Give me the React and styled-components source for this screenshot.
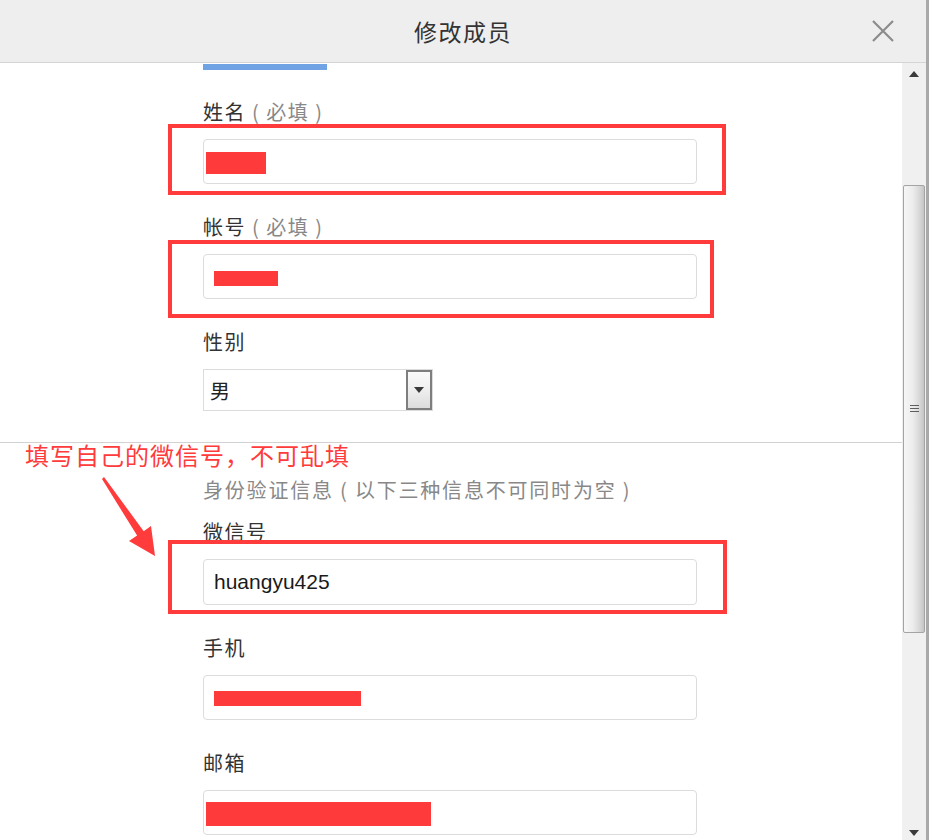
import React from 'react';
import styled, { createGlobalStyle } from 'styled-components';

const GlobalStyle = createGlobalStyle`
  body {
    margin: 0;
    background: #ffffff;
    font-family: "Noto Sans CJK SC", "Noto Sans", sans-serif;
  }
`;

const Dialog = styled.div`
  width: 926px;
  height: 840px;
  border-right: 3px solid #a9a9a9;
  display: flex;
  flex-direction: column;
  overflow: hidden;
`;

const Header = styled.div`
  height: 62px;
  flex-shrink: 0;
  background: #eeeeee;
  border-bottom: 1px solid #d4d4d4;
  display: flex;
  align-items: center;
  justify-content: center;
  position: relative;
`;

const Title = styled.h1`
  margin: 0;
  font-size: 23px;
  font-weight: 400;
  color: #333;
  letter-spacing: 1.5px;
`;

const CloseButton = styled.button`
  position: absolute;
  right: 30px;
  top: 18px;
  width: 26px;
  height: 26px;
  padding: 0;
  border: none;
  background: none;
  display: flex;
  align-items: center;
  justify-content: center;
`;

const Body = styled.div`
  flex: 1;
  display: flex;
  min-height: 0;
`;

const Content = styled.div`
  flex: 1;
  position: relative;
  overflow: hidden;
  background: #fff;
`;

const Section = styled.div`
  display: flex;
  flex-direction: column;
  align-items: flex-start;
  padding-left: 203px;
  padding-top: ${(p) => p.$top || 0}px;
`;

const ProgressStub = styled.div`
  width: 124px;
  height: 6px;
  background: #6fa3e4;
  margin-top: 1px;
  margin-bottom: 29px;
`;

const Field = styled.div`
  display: flex;
  flex-direction: column;
  align-items: flex-start;
  margin-bottom: ${(p) => (p.$last ? 0 : 30)}px;
`;

const Label = styled.label`
  font-size: 20px;
  line-height: 26px;
  letter-spacing: 1.5px;
  color: #333;
  white-space: pre;
  margin-bottom: 14px;
`;

const Hint = styled.span`
  color: #888;
`;

const InfoText = styled.div`
  font-size: 20px;
  line-height: 26px;
  letter-spacing: 1.8px;
  white-space: pre;
  color: #888;
  margin-bottom: 16px;
`;

const InputWrap = styled.div`
  position: relative;
`;

const TextBox = styled.div`
  box-sizing: border-box;
  width: 494px;
  height: ${(p) => p.$h || 45}px;
  border: 1px solid #dcdcdc;
  border-radius: 4px;
  background: #fff;
  display: flex;
  align-items: center;
  padding-left: ${(p) => p.$pad ?? 10}px;
  font-family: "Liberation Sans", Arial, sans-serif;
  font-size: 21px;
  color: #1a1a1a;
`;

const Redact = styled.span`
  display: inline-block;
  width: ${(p) => p.$w}px;
  height: ${(p) => p.$h}px;
  margin-top: ${(p) => p.$y || 0}px;
  background: #ff3a3a;
`;

const Mark = styled.div`
  position: absolute;
  box-sizing: border-box;
  top: ${(p) => p.$t}px;
  left: ${(p) => p.$l}px;
  right: ${(p) => p.$r}px;
  bottom: ${(p) => p.$b}px;
  border: 4px solid #ff3b3b;
  pointer-events: none;
`;

const Select = styled.div`
  box-sizing: border-box;
  width: 230px;
  height: 42px;
  border: 1px solid #dcdcdc;
  display: flex;
  align-items: stretch;
`;

const SelectValue = styled.div`
  flex: 1;
  display: flex;
  align-items: center;
  padding-left: 6px;
  font-size: 20px;
  color: #222;
`;

const SelectButton = styled.div`
  box-sizing: border-box;
  width: 26px;
  border: 2px solid #7e7e7e;
  background: linear-gradient(#fafafa 0%, #f0f0f0 45%, #dcdcdc 100%);
  display: flex;
  align-items: center;
  justify-content: center;
`;

const Divider = styled.hr`
  margin: 31px 0 0;
  border: none;
  border-top: 1px solid #d2d2d2;
  width: 100%;
`;

const Annotation = styled.div`
  position: absolute;
  left: 25px;
  top: 377px;
  font-size: 24px;
  line-height: 30px;
  color: #ff3b3b;
  letter-spacing: 1px;
`;

const ArrowSvg = styled.svg`
  position: absolute;
  left: 95px;
  top: 407px;
`;

const Scrollbar = styled.div`
  width: 24px;
  flex-shrink: 0;
  background: #f0f0f0;
  display: flex;
  flex-direction: column;
  align-items: center;
  padding: 8px 0 4px;
  box-sizing: border-box;
`;

const Track = styled.div`
  flex: 1;
  width: 100%;
  display: flex;
  flex-direction: column;
  align-items: center;
  padding: 108px 0 197px;
  box-sizing: border-box;
`;

const Thumb = styled.div`
  box-sizing: border-box;
  width: 22px;
  flex: 1;
  border: 1px solid #a4a4a4;
  border-radius: 2px;
  background: linear-gradient(90deg, #f6f6f6 0%, #ececec 45%, #d6d6d6 80%, #c4c4c4 100%);
  display: flex;
  align-items: center;
  justify-content: center;
`;

const Grip = styled.div`
  width: 9px;
  height: 8px;
  background: repeating-linear-gradient(#5e5e5e 0 1px, transparent 1px 3px);
`;

const Caret = ({ up }) => (
  <svg width="10" height="6" viewBox="0 0 10 6">
    <polygon points={up ? '0,6 10,6 5,0' : '0,0 10,0 5,6'} fill="#3a3a3a" />
  </svg>
);

const LabeledField = ({ label, hint, last, children }) => (
  <Field $last={last}>
    <Label>
      {label}
      {hint && <Hint>{` ( ${hint} )`}</Hint>}
    </Label>
    {children}
  </Field>
);

export default function App() {
  return (
    <>
      <GlobalStyle />
      <Dialog>
        <Header>
          <Title>修改成员</Title>
          <CloseButton aria-label="关闭">
            <svg width="24" height="24" viewBox="0 0 24 24">
              <path d="M2 2 L22 22 M22 2 L2 22" stroke="#8c8c8c" strokeWidth="2.2" />
            </svg>
          </CloseButton>
        </Header>
        <Body>
          <Content>
            <Section>
              <ProgressStub />
              <LabeledField label="姓名" hint="必填">
                <InputWrap>
                  <TextBox $pad={2}>
                    <Redact $w={60} $h={22} $y={2} />
                  </TextBox>
                  <Mark $t={-15} $l={-35} $r={-29} $b={-11} />
                </InputWrap>
              </LabeledField>
              <LabeledField label="帐号" hint="必填">
                <InputWrap>
                  <TextBox>
                    <Redact $w={64} $h={15} $y={4} />
                  </TextBox>
                  <Mark $t={-14} $l={-35} $r={-17} $b={-19} />
                </InputWrap>
              </LabeledField>
              <LabeledField label="性别" last>
                <Select>
                  <SelectValue>男</SelectValue>
                  <SelectButton>
                    <Caret />
                  </SelectButton>
                </Select>
              </LabeledField>
            </Section>
            <Divider />
            <Section $top={34}>
              <InfoText>{'身份验证信息 ( 以下三种信息不可同时为空 )'}</InfoText>
              <LabeledField label="微信号">
                <InputWrap>
                  <TextBox $h={46}>huangyu425</TextBox>
                  <Mark $t={-19} $l={-35} $r={-30} $b={-9} />
                </InputWrap>
              </LabeledField>
              <LabeledField label="手机">
                <TextBox>
                  <Redact $w={147} $h={15} $y={2} />
                </TextBox>
              </LabeledField>
              <LabeledField label="邮箱" last>
                <TextBox $pad={2}>
                  <Redact $w={225} $h={24} $y={2} />
                </TextBox>
              </LabeledField>
            </Section>
            <Annotation>填写自己的微信号，不可乱填</Annotation>
            <ArrowSvg width="70" height="95" viewBox="0 0 70 95">
              <polygon
                points="7,9 9,7 48.7,61.2 56,56 60,86 34,71 42.1,65.6"
                fill="#ff3b3b"
              />
            </ArrowSvg>
          </Content>
          <Scrollbar>
            <Caret up />
            <Track>
              <Thumb>
                <Grip />
              </Thumb>
            </Track>
            <Caret />
          </Scrollbar>
        </Body>
      </Dialog>
    </>
  );
}
